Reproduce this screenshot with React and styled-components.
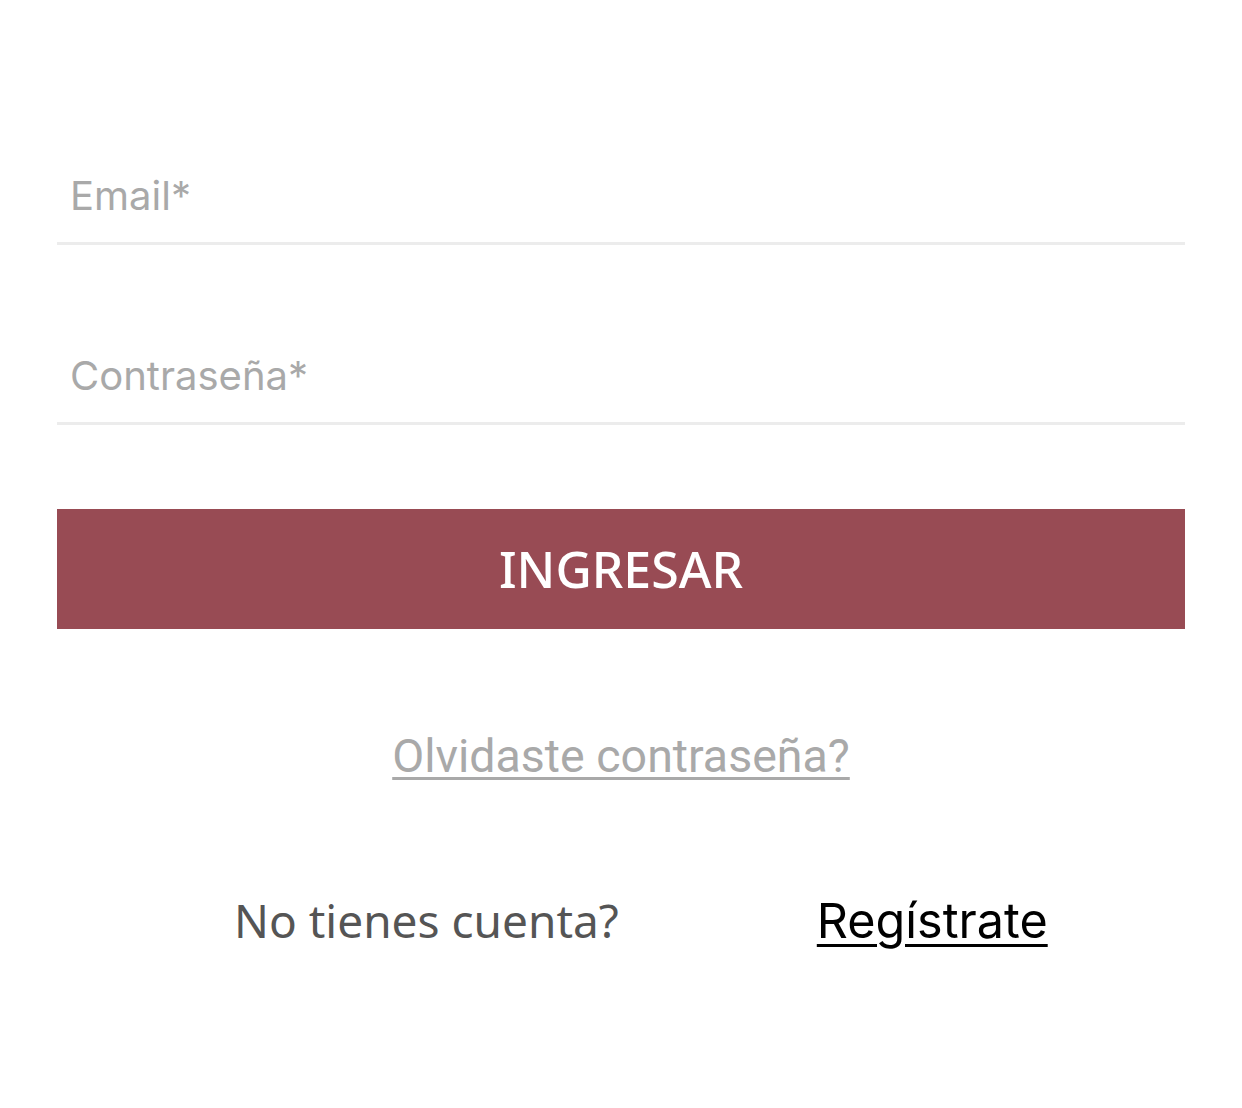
import React from "react";
import styled, { createGlobalStyle } from "styled-components";

const GlobalStyle = createGlobalStyle`
  body {
    margin: 0;
    background: #ffffff;
    font-family: "Inter", "Liberation Sans", sans-serif;
  }
`;

const Page = styled.div`
  display: flex;
  flex-direction: column;
  padding: 0 57px;
  padding-top: 157px;
  height: 1108px;
  box-sizing: border-box;
`;

const Field = styled.input`
  display: block;
  width: 100%;
  box-sizing: border-box;
  border: none;
  border-bottom: 3px solid #ececec;
  outline: none;
  background: transparent;
  padding: 0 13px 8px;
  height: 88px;
  margin-bottom: ${(props) => props.gap || "0px"};
  font-family: "Inter", "Liberation Sans", sans-serif;
  font-size: 40px;
  color: #333;

  &::placeholder {
    color: #a9a9a9;
  }
`;

const SubmitButton = styled.button`
  width: 100%;
  height: 120px;
  border: none;
  background-color: #984b54;
  color: #ffffff;
  font-family: "Noto Sans", "Open Sans", sans-serif;
  font-weight: 500;
  font-size: 50px;
  margin-top: 84px;
  cursor: pointer;
`;

const ForgotLink = styled.a`
  align-self: center;
  margin-top: 100px;
  font-family: "Roboto", "Inter", sans-serif;
  font-size: 46.5px;
  color: #a9a9a9;
  text-decoration: underline;
  text-decoration-thickness: 3px;
  text-underline-offset: 5px;
`;

const SignupRow = styled.div`
  display: flex;
  align-items: baseline;
  gap: 198px;
  padding-left: 177px;
  margin-top: 106px;
`;

const Prompt = styled.span`
  font-family: "Noto Sans", "Open Sans", sans-serif;
  font-size: 46px;
  color: #555555;
`;

const SignupLink = styled.a`
  font-family: "Inter", "Liberation Sans", sans-serif;
  font-size: 48.5px;
  color: #000000;
  text-decoration: underline;
  text-decoration-thickness: 3px;
  text-underline-offset: 6px;
`;

function App() {
  return (
    <>
      <GlobalStyle />
      <Page>
        <Field type="email" placeholder="Email*" gap="92px" />
        <Field type="password" placeholder="Contraseña*" />
        <SubmitButton>INGRESAR</SubmitButton>
        <ForgotLink href="#">Olvidaste contraseña?</ForgotLink>
        <SignupRow>
          <Prompt>No tienes cuenta?</Prompt>
          <SignupLink href="#">Regístrate</SignupLink>
        </SignupRow>
      </Page>
    </>
  );
}

export default App;
